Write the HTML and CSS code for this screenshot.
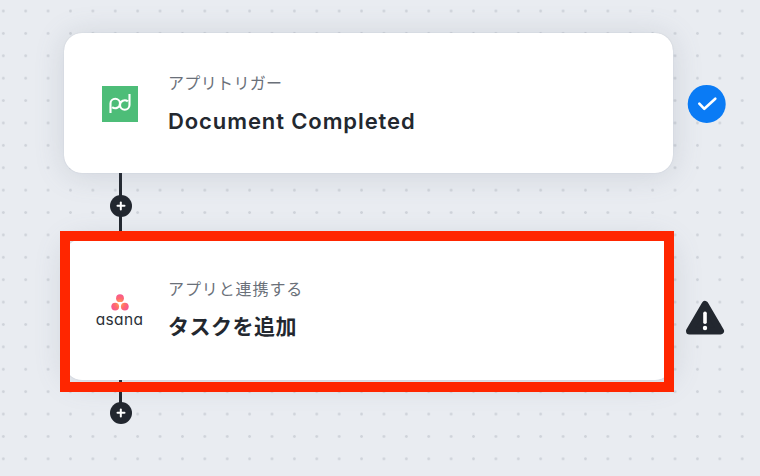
FILE: index.html
```html
<!DOCTYPE html>
<html lang="ja">
<head>
<meta charset="utf-8">
<title>フロー</title>
<link rel="stylesheet" href="styles.css">
</head>
<body>
<main class="flow">
  <div class="step">
    <section class="card">
      <div class="logo">
        <svg class="pd" width="36" height="36" viewBox="0 0 36 36" aria-hidden="true">
          <rect width="36" height="36" fill="#4dbd78"/>
          <path d="M8.5 27V17.5a4.75 4.75 0 0 1 9.5 0v1.5a4.75 4.75 0 0 0 9.5 0V8M18 17.5a4.75 4.75 0 0 1-7.8 3.6M18 19a4.75 4.75 0 0 1 7.8-3.6" fill="none" stroke="#fff" stroke-width="2.1"/>
        </svg>
      </div>
      <div class="text">
        <p class="label label-tight">アプリトリガー</p>
        <h2 class="title title-en">Document Completed</h2>
      </div>
    </section>
    <svg class="status" width="40" height="40" viewBox="0 0 40 40" aria-hidden="true">
      <circle cx="19.7" cy="20.9" r="19" fill="#0a7bf5"/>
      <path d="M12.3 20.6l5 5.2 11-10.1" fill="none" stroke="#fff" stroke-width="2.6" stroke-linecap="round" stroke-linejoin="round"/>
    </svg>
  </div>

  <div class="connector"><span class="plus"></span></div>

  <div class="step">
    <section class="card card-tall">
      <div class="logo">
        <div class="asana">
          <svg width="18" height="18" viewBox="0 0 18 18" aria-hidden="true">
            <defs>
              <radialGradient id="ag" gradientUnits="userSpaceOnUse" cx="9" cy="9.5" r="9">
                <stop offset="0" stop-color="#ffb04f"/>
                <stop offset=".55" stop-color="#ff6c6c"/>
                <stop offset="1" stop-color="#f8588f"/>
              </radialGradient>
            </defs>
            <circle cx="9" cy="4.2" r="3.9" fill="url(#ag)"/>
            <circle cx="4.2" cy="12.6" r="3.9" fill="url(#ag)"/>
            <circle cx="13.8" cy="12.6" r="3.9" fill="url(#ag)"/>
          </svg>
          <span class="asana-word">asana</span>
        </div>
      </div>
      <div class="text">
        <p class="label label-wide">アプリと連携する</p>
        <h2 class="title">タスクを追加</h2>
      </div>
    </section>
    <svg class="status warn" width="40" height="36" viewBox="0 0 40 36" aria-hidden="true">
      <path d="M20 4.5 35.5 31H4.5Z" fill="#22272f" stroke="#22272f" stroke-width="7" stroke-linejoin="round"/>
      <rect x="18.2" y="11.5" width="3.6" height="12.5" rx="1.8" fill="#fff"/>
      <circle cx="20" cy="28" r="2.2" fill="#fff"/>
    </svg>
    <div class="highlight"></div>
  </div>

  <div class="connector connector-end"><span class="plus"></span></div>
</main>
</body>
</html>
```
FILE: styles.css
```css
* { box-sizing: border-box; }
html, body { margin: 0; height: 100%; }
body {
  background-color: #e9ecf1;
  background-image: radial-gradient(circle, #cfd3da 1.1px, transparent 1.6px);
  background-size: 22.4px 22.4px;
  background-position: -7.9px -0.2px;
  font-family: Inter, "Noto Sans CJK JP", sans-serif;
  overflow: hidden;
}
.flow {
  display: flex;
  flex-direction: column;
  padding: 33px 0 0 64px;
}
.step {
  position: relative;
  display: flex;
  align-items: center;
  gap: 14px;
}
.card {
  width: 609px;
  height: 140px;
  display: flex;
  align-items: center;
  background: #fff;
  border-radius: 18px;
  box-shadow: 0 0 1px rgba(120, 130, 150, .4), 0 2px 30px rgba(100, 110, 130, .2);
}
.card-tall { height: 141px; padding-bottom: 1px; }
.logo {
  width: 104px;
  flex: none;
  display: flex;
  justify-content: center;
  padding: 2px 0 0 7px;
}
.pd { display: block; }
.asana {
  display: flex;
  flex-direction: column;
  align-items: center;
  color: #2b3138;
}
.asana svg { display: block; }
.asana-word {
  font-size: 15.5px;
  line-height: 15px;
  letter-spacing: .35px;
  font-feature-settings: "cv11";
}
.text { display: flex; flex-direction: column; gap: 14px; }
.label {
  margin: 0;
  font-size: 16px;
  line-height: 22px;
  color: #6a7079;
}
.label-tight { letter-spacing: .35px; }
.label-wide { letter-spacing: .9px; }
.title {
  margin: 0;
  font-size: 21px;
  line-height: 26px;
  font-weight: 700;
  letter-spacing: .5px;
  color: #23282f;
}
.title-en { font-size: 22px; font-weight: 600; letter-spacing: .9px; }
.connector {
  width: 3px;
  height: 66px;
  margin-left: 55px;
  background: #22272f;
  display: flex;
  align-items: center;
  justify-content: center;
}
.connector-end { height: 33px; align-items: flex-end; }
.plus {
  flex: none;
  position: relative;
  width: 22px;
  height: 22px;
  border-radius: 50%;
  background: #22272f;
}
.connector-end .plus { margin-bottom: -11px; }
.plus::before, .plus::after {
  content: "";
  position: absolute;
  left: 50%;
  top: 50%;
  background: #fff;
  border-radius: 1px;
  transform: translate(-50%, -50%);
}
.plus::before { width: 9px; height: 2.4px; }
.plus::after { width: 2.4px; height: 9px; }
.warn { margin: 16px 0 0 -2px; }
.highlight {
  position: absolute;
  left: -4px;
  top: -8px;
  width: 614px;
  height: 161px;
  border: 10px solid #ff2600;
}
```
